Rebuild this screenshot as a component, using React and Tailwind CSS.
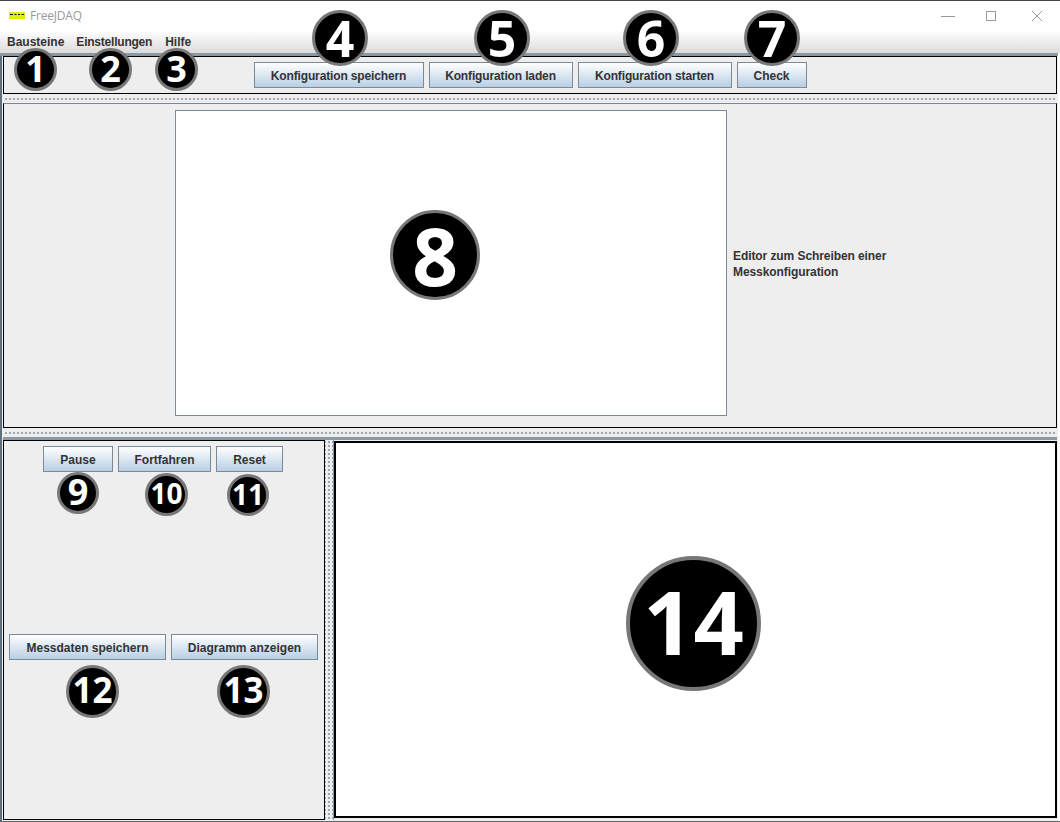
import React from 'react';

const SansBold = "font-['Liberation_Sans',sans-serif] font-bold text-xs";

// Swing "Ocean" style button
const JButton = ({ label, width, tight }) => (
    <button
        className={`${SansBold} ${width} ${tight ? 'tracking-[-0.14px]' : ''} h-[26px] shrink-0 border border-[#7a8a99] bg-gradient-to-b from-white to-[#b8cfe5] pt-px text-[#333333]`}
    >
        {label}
    </button>
);

// Numbered callout lying over the window
const Badge = ({ n, className }) => (
    <div
        className={`absolute flex items-center justify-center rounded-full border-[#777777] bg-black font-['Open_Sans',sans-serif] font-bold leading-none text-white ${className}`}
    >
        {n}
    </div>
);

const Divider = () => (
    <div className="h-[9px] shrink-0 bg-[#eeeeee] bg-[radial-gradient(circle,#9aa7b3_0.7px,transparent_1px)] bg-size-[4px_4px] bg-center bg-repeat-x" />
);

const App = () => {
    return (
        <div className="relative flex h-[822px] w-[1060px] flex-col overflow-hidden bg-white">
            <div className="h-px shrink-0 bg-[#444444]" />

            {/* Title bar */}
            <div className="flex h-[29px] shrink-0 items-center bg-white pl-[9px]">
                <svg width="16" height="7" viewBox="0 0 16 7" className="mb-[1px]">
                    <rect width="16" height="7" fill="#dcf000" />
                    <path d="M1 2.5h3M5.5 2.5h2M9 2.5h2M12.5 2.5h2.5" stroke="#111" strokeWidth="1.2" />
                </svg>
                <span className="ml-[5px] font-['Open_Sans',sans-serif] text-xs tracking-[-0.2px] text-[#9a9a9a]">FreeJDAQ</span>
                <div className="ml-auto flex items-center">
                    <svg width="14" height="12" viewBox="0 0 14 12" className="mr-[31px]">
                        <path d="M0 6.5h14" stroke="#999" />
                    </svg>
                    <svg width="10" height="10" viewBox="0 0 10 10" className="mr-[36px]">
                        <rect x="0.5" y="0.5" width="9" height="9" fill="none" stroke="#999" />
                    </svg>
                    <svg width="10" height="10" viewBox="0 0 10 10" className="mr-[18px]">
                        <path d="M0 0l10 10M10 0l-10 10" stroke="#999" />
                    </svg>
                </div>
            </div>

            {/* Menu bar */}
            <div className={`${SansBold} flex h-[23px] shrink-0 items-center gap-3 bg-gradient-to-b from-white to-[#dcdcdc] pl-[7px] text-[#333333]`}>
                <span>Bausteine</span>
                <span className="tracking-[-0.22px]">Einstellungen</span>
                <span className="ml-px">Hilfe</span>
            </div>
            <div className="mr-[2px] h-[3px] shrink-0 bg-[#8a99a6]" />

            <div className="mr-[2px] flex min-h-0 flex-1 flex-col border-l-2 border-[#5f6f7d] bg-[#eeeeee] pb-px pl-px pr-px">
                {/* Toolbar */}
                <div className="flex h-[38px] shrink-0 items-center justify-center gap-[5px] border border-black">
                    <JButton tight label="Konfiguration speichern" width="w-[170px]" />
                    <JButton tight label="Konfiguration laden" width="w-[144px]" />
                    <JButton tight label="Konfiguration starten" width="w-[154px]" />
                    <JButton label="Check" width="w-[70px]" />
                </div>
                <Divider />

                {/* Editor */}
                <div className="flex h-[325px] shrink-0 border border-black border-t-[#7a8a99] pb-[11px] pl-[171px] pt-[6px]">
                    <div className="w-[552px] border border-[#7a8a99] bg-white" />
                    <p className={`${SansBold} ml-[6px] mt-[138px] w-[190px] leading-4 tracking-[-0.08px] text-[#333333]`}>
                        Editor zum Schreiben einer Messkonfiguration
                    </p>
                </div>
                <Divider />
                <div className="h-[3px] shrink-0 bg-[#8a99a6]" />

                {/* Bottom area */}
                <div className="flex min-h-0 flex-1">
                    <div className="flex w-[322px] shrink-0 flex-col border border-black pl-[5px] pt-[5px]">
                        <div className="flex gap-[5px] pl-[34px]">
                            <JButton label="Pause" width="w-[70px]" />
                            <JButton label="Fortfahren" width="w-[93px]" />
                            <JButton label="Reset" width="w-[67px]" />
                        </div>
                        <div className="mt-[162px] flex gap-[5px]">
                            <JButton label="Messdaten speichern" width="w-[157px]" />
                            <JButton label="Diagramm anzeigen" width="w-[147px]" />
                        </div>
                    </div>
                    <div className="w-[9px] shrink-0 border-r border-[#8a99a6] bg-[radial-gradient(circle,#9aa7b3_0.7px,transparent_1px)] bg-size-[4px_4px] bg-center" />
                    <div className="mb-[2px] mt-px min-w-0 flex-1 border-2 border-black bg-white" />
                </div>
            </div>
            <div className="h-px shrink-0 bg-[#666666]" />

            <Badge n="1" className="left-[14px] top-[48px] h-[43px] w-[43px] border-[3px] pb-[2px] text-[36px]" />
            <Badge n="2" className="left-[89px] top-[48px] h-[43px] w-[43px] border-[3px] pb-[2px] text-[36px]" />
            <Badge n="3" className="left-[155px] top-[48px] h-[43px] w-[43px] border-[3px] pb-[2px] text-[36px]" />
            <Badge n="4" className="left-[312px] top-[10px] h-[56px] w-[56px] border-[3px] text-[50px]" />
            <Badge n="5" className="left-[474px] top-[10px] h-[56px] w-[56px] border-[3px] text-[50px]" />
            <Badge n="6" className="left-[623px] top-[10px] h-[56px] w-[56px] border-[3px] text-[50px]" />
            <Badge n="7" className="left-[744px] top-[10px] h-[56px] w-[56px] border-[3px] text-[50px]" />
            <Badge n="8" className="left-[390px] top-[210px] h-[90px] w-[90px] border-[3px] text-[80px]" />
            <Badge n="9" className="left-[57px] top-[472px] h-[42px] w-[42px] border-[3px] pb-[2px] text-[36px]" />
            <Badge n="10" className="left-[145px] top-[473px] h-[43px] w-[43px] border-[3px] pb-[3px] text-[28px]" />
            <Badge n="11" className="left-[227px] top-[474px] h-[42px] w-[42px] border-[3px] pb-[3px] text-[28px]" />
            <Badge n="12" className="left-[66px] top-[665px] h-[53px] w-[53px] border-[3px] pb-[4px] text-[35px]" />
            <Badge n="13" className="left-[217px] top-[665px] h-[53px] w-[53px] border-[3px] pb-[4px] text-[35px]" />
            <Badge n="14" className="left-[626px] top-[556px] h-[135px] w-[135px] border-[4px] pb-[6px] text-[88px]" />
        </div>
    );
};

export default App;
